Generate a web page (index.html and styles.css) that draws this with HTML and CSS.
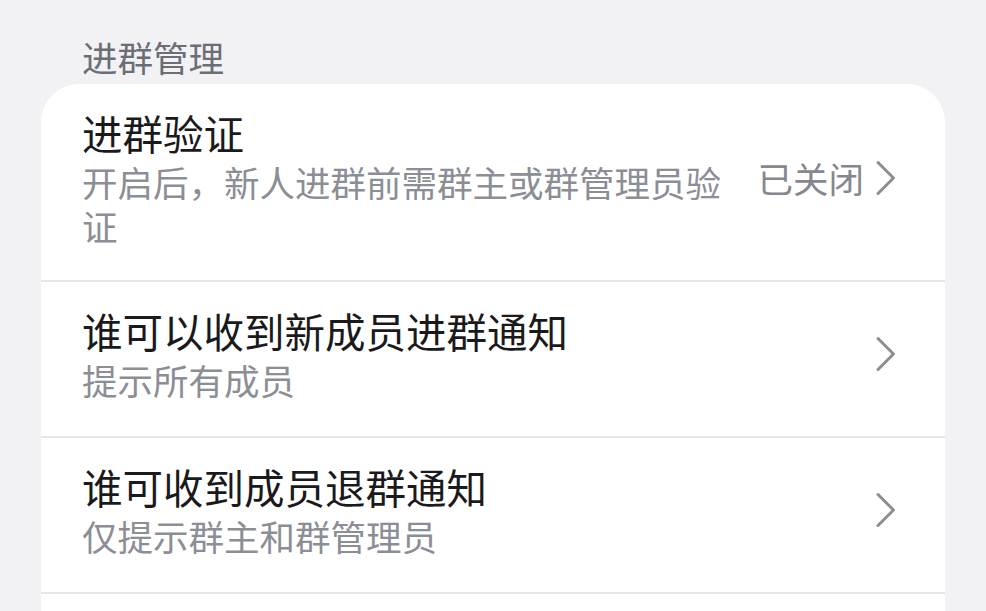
FILE: index.html
```html
<!DOCTYPE html>
<html lang="zh-CN">
<head>
<meta charset="utf-8">
<title>进群管理</title>
<link rel="stylesheet" href="styles.css">
</head>
<body>
  <div class="page">
    <div class="section-title">进群管理</div>
    <div class="card">
      <div class="row">
        <div class="text">
          <div class="title">进群验证</div>
          <div class="sub">开启后，新人进群前需群主或群管理员验证</div>
        </div>
        <div class="right">
          <span class="value">已关闭</span>
          <svg class="chev" width="22" height="36" viewBox="0 0 22 36"><path d="M3 2.5 L18.5 18 L3 33.5" fill="none" stroke="#8c8d92" stroke-width="3" stroke-linecap="round" stroke-linejoin="round"/></svg>
        </div>
      </div>
      <div class="row">
        <div class="text">
          <div class="title">谁可以收到新成员进群通知</div>
          <div class="sub">提示所有成员</div>
        </div>
        <div class="right">
          <svg class="chev" width="22" height="36" viewBox="0 0 22 36"><path d="M3 2.5 L18.5 18 L3 33.5" fill="none" stroke="#8c8d92" stroke-width="3" stroke-linecap="round" stroke-linejoin="round"/></svg>
        </div>
      </div>
      <div class="row">
        <div class="text">
          <div class="title">谁可收到成员退群通知</div>
          <div class="sub">仅提示群主和群管理员</div>
        </div>
        <div class="right">
          <svg class="chev" width="22" height="36" viewBox="0 0 22 36"><path d="M3 2.5 L18.5 18 L3 33.5" fill="none" stroke="#8c8d92" stroke-width="3" stroke-linecap="round" stroke-linejoin="round"/></svg>
        </div>
      </div>
      <div class="row row-empty"></div>
    </div>
  </div>
</body>
</html>
```
FILE: styles.css
```css
html, body {
  margin: 0;
  padding: 0;
  background: #f2f2f5;
  overflow: hidden;
}
body {
  font-family: "Noto Sans CJK SC", "Noto Sans", sans-serif;
}
.page {
  padding: 0 41px;
}
.section-title {
  padding: 35px 0 0 41px;
  height: 44px;
  line-height: 44px;
  font-size: 35.5px;
  color: #6b6e75;
  margin-bottom: 5px;
}
.card {
  background: #ffffff;
  border-radius: 38px 38px 0 0;
}
.row {
  display: flex;
  align-items: center;
  padding: 24px 48px 34px 41px;
  border-top: 2px solid #e6e6e9;
}
.row:first-child {
  border-top: none;
  padding-bottom: 32px;
}
.text {
  flex: 1;
  min-width: 0;
  padding-right: 18px;
}
.title {
  font-size: 40.5px;
  line-height: 50px;
  margin-bottom: 2px;
  color: #1a1a1c;
}
.sub {
  font-size: 35.5px;
  line-height: 44px;
  color: #8b8e94;
}
.right {
  display: flex;
  align-items: center;
  gap: 11px;
}
.value {
  font-size: 35.5px;
  line-height: 44px;
  color: #85888e;
}
.chev {
  display: block;
}
.row-empty {
  height: 60px;
}
```
